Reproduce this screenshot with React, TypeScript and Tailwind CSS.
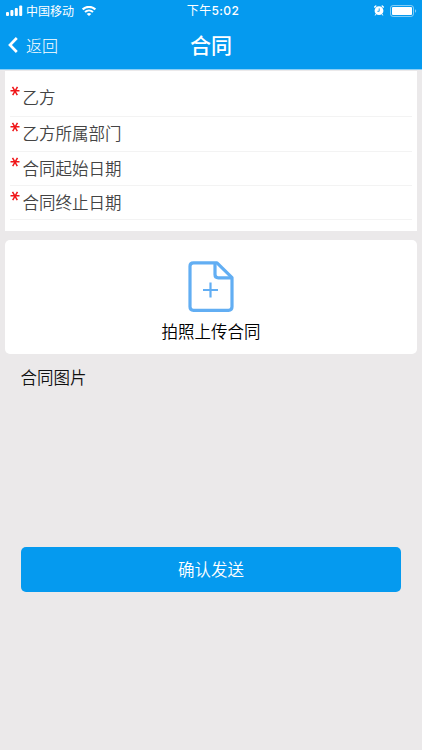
import { clsx } from 'clsx'

const fields = [
  { id: 'partyB', label: '乙方', rowClass: 'h-[46px] pt-[7px]' },
  { id: 'department', label: '乙方所属部门', rowClass: 'h-[35px] pb-px' },
  { id: 'startDate', label: '合同起始日期', rowClass: 'h-[34px]' },
  { id: 'endDate', label: '合同终止日期', rowClass: 'h-[34px]' },
]

const SignalIcon = () => (
  <svg className="h-[11px] w-[17px]" viewBox="0 0 17 11" fill="white">
    <rect x="0" y="7" width="3" height="4" rx="1" />
    <rect x="4.4" y="5" width="3" height="6" rx="1" />
    <rect x="8.8" y="3" width="3" height="8" rx="1" />
    <rect x="13.2" y="0.5" width="3" height="10.5" rx="1" />
  </svg>
)

const WifiIcon = () => (
  <svg className="h-[10px] w-[14px]" viewBox="0 0 14 10" fill="none" stroke="white">
    <path d="M0.7 3.4C4.2 0 9.8 0 13.3 3.4" strokeWidth="2.1" />
    <path d="M3 6.1C5.3 4 8.7 4 11 6.1" strokeWidth="2" />
    <path d="M7 10L4.7 7.9C6 6.7 8 6.7 9.3 7.9Z" fill="white" stroke="none" />
  </svg>
)

const AlarmIcon = () => (
  <svg className="h-[11px] w-[10px]" viewBox="0 0 10 11" fill="none">
    <path d="M0.7 2L1.8 1M9.3 2L8.2 1" stroke="white" strokeWidth="1.4" strokeLinecap="round" />
    <circle cx="5" cy="5.7" r="4.4" fill="white" />
    <path d="M2 9L1.4 10.1M8 9L8.6 10.1" stroke="white" strokeWidth="1" strokeLinecap="round" />
    <path d="M5.2 3.4V6.3H3.4" stroke="#059aef" strokeWidth="0.9" />
  </svg>
)

const BatteryIcon = () => (
  <svg className="h-[12px] w-[27px]" viewBox="0 0 27 12">
    <rect x="0.5" y="0.5" width="23" height="11" rx="2.6" fill="none" stroke="white" strokeOpacity="0.5" />
    <rect x="2" y="2" width="20" height="8" rx="1" fill="white" />
    <path d="M25 4.2C26.6 4.8 26.6 7.2 25 7.8Z" fill="white" fillOpacity="0.5" />
  </svg>
)

const FileAddIcon = () => (
  <svg
    className="h-[51px] w-[46px]"
    viewBox="0 0 46 51"
    fill="none"
    stroke="#62aef3"
    strokeWidth="3.2"
    strokeLinejoin="round"
  >
    <path d="M29 1.8H5.5Q2 1.8 2 5.3V45.8Q2 49.3 5.5 49.3H40.5Q44 49.3 44 45.8V16.6Z" />
    <path d="M27 2V13.5Q27 16.8 30.3 16.8H43.5" />
    <path d="M22.5 21.5V36.5M15 29H30" strokeWidth="2.2" />
  </svg>
)

const RequiredMark = () => (
  <svg className="mb-[13px] h-[10px] w-[10px] shrink-0" viewBox="0 0 10 10" stroke="#f01518" strokeWidth="1.5">
    <path d="M0.5 4.8H9.5M2.5 0.8L7.3 9.2M7.5 0.8L2.7 9.2" />
  </svg>
)

const StatusBar = () => (
  <div className="grid h-[21px] grid-cols-3 items-center pl-1.5 pr-[5px] text-xs leading-none">
    <div className="flex items-center">
      <SignalIcon />
      <span className="ml-[3px] mr-[8px] whitespace-nowrap">中国移动</span>
      <WifiIcon />
    </div>
    <div className="pt-px pl-[3px] text-center font-['Inter','Noto_Sans_CJK_SC',sans-serif] text-[12px] tracking-[0.35px]">
      下午<span className="font-medium">5:02</span>
    </div>
    <div className="flex items-center justify-end gap-[6px]">
      <AlarmIcon />
      <BatteryIcon />
    </div>
  </div>
)

const NavBar = () => (
  <div className="grid h-12 grid-cols-3 items-center">
    <button className="flex items-center pl-2 text-left">
      <svg className="h-4 w-[10px]" viewBox="0 0 10 16" fill="none" stroke="white" strokeWidth="2.7">
        <path d="M8.8 1L2 8L8.8 15" />
      </svg>
      <span className="ml-[8px] text-[16px] font-light">返回</span>
    </button>
    <h1 className="pb-[2px] text-center text-[21px] font-medium leading-none">合同</h1>
  </div>
)

export default function App() {
  return (
    <div className="h-[750px] w-[422px] overflow-hidden bg-[#ebe9ea] font-['Noto_Sans_CJK_SC',sans-serif]">
      <header className="h-[70px] border-b border-[#8bcff6] bg-[#059aef] text-white">
        <StatusBar />
        <NavBar />
      </header>

      <section className="mx-[5px] mt-px h-[160px] bg-white px-[5px]">
        {fields.map((field) => (
          <div
            key={field.id}
            className={clsx('flex items-center border-b border-[#f3f3f3]', field.rowClass)}
          >
            <RequiredMark />
            <span className="ml-[2.5px] text-[16.5px] font-[350] leading-none text-[#444]">{field.label}</span>
          </div>
        ))}
      </section>

      <button className="mx-[5px] mt-[9px] flex h-[114px] w-[412px] flex-col items-center rounded-[5px] bg-white pt-[21px]">
        <FileAddIcon />
        <span className="mt-[11px] text-[16.5px] font-[350] leading-none text-black">拍照上传合同</span>
      </button>

      <h2 className="mt-[15px] ml-[20.5px] text-[16.5px] font-[350] leading-none text-[#111]">合同图片</h2>

      <div className="h-[161px]" />

      <button className="mx-[21px] h-[45px] w-[380px] rounded-[5px] bg-[#059aef] text-[16.5px] font-[350] text-white">
        确认发送
      </button>
    </div>
  )
}
